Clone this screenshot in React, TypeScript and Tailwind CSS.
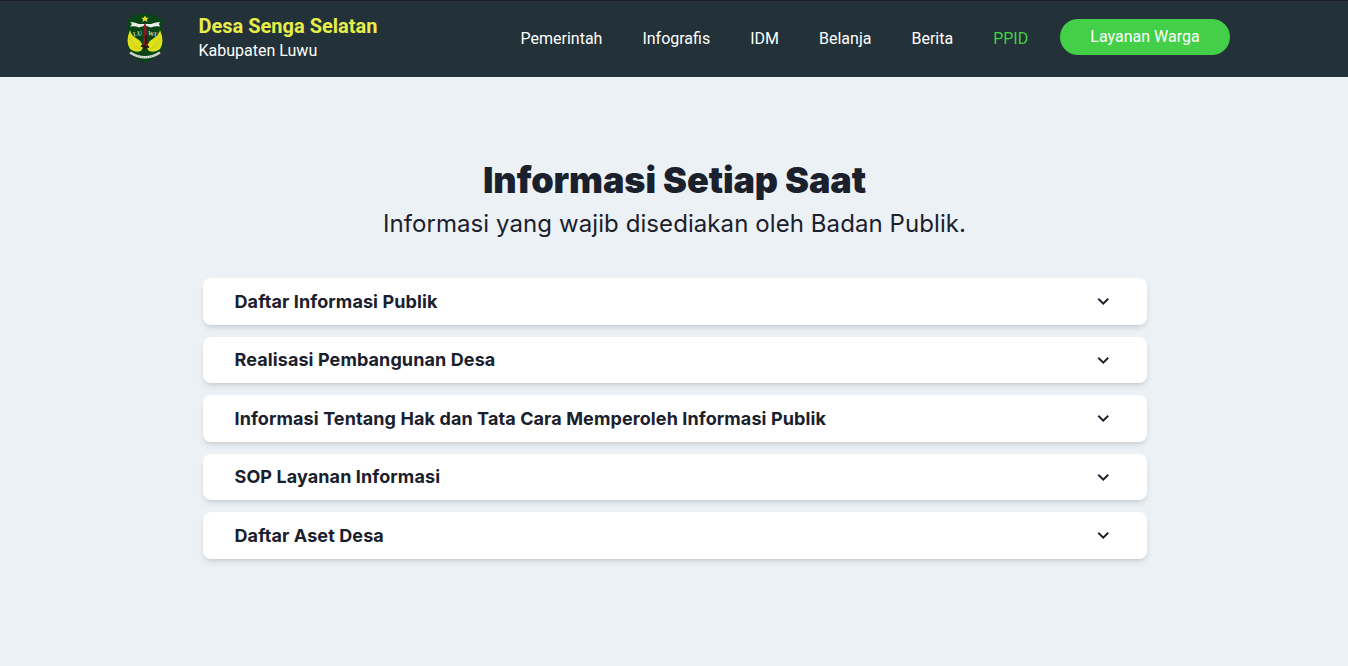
const links = ['Pemerintah', 'Infografis', 'IDM', 'Belanja', 'Berita', 'PPID'];

const sections = [
  'Daftar Informasi Publik',
  'Realisasi Pembangunan Desa',
  'Informasi Tentang Hak dan Tata Cara Memperoleh Informasi Publik',
  'SOP Layanan Informasi',
  'Daftar Aset Desa',
];

function Emblem() {
  return (
    <svg className="h-[50px] w-[38px] shrink-0" viewBox="0 0 38 50" aria-label="Kabupaten Luwu">
      <path d="M1 6 Q6 6 9 2 Q19 0 29 2 Q32 6 37 6 Q35 10 36 16 L37 34 Q34 43 19 50 Q4 43 1 34 L2 16 Q3 10 1 6Z" fill="#064516" />
      <path d="M4 17 Q-1 29 4 36 Q9 40 15 38 Q18 35 16 31 Q14 27 10 25 Q5 22 4 17Z M34 17 Q39 29 34 36 Q29 40 23 38 Q20 35 22 31 Q24 27 28 25 Q33 22 34 17Z" fill="#dfdf1c" />
      <path d="M4 25 Q6 31 13 35 M5 31 Q8 35 14 36 M34 25 Q32 31 25 35 M33 31 Q30 35 24 36" fill="none" stroke="#b9bf18" strokeWidth=".5" />
      <path d="M4 9 Q8 9 13 11 L25 11 Q30 9 34 9 L33 11 L34 13.500 Q29 12.500 25 14.500 L19 12.500 L13 14.500 Q9 12.500 4 13.500 L6 11Z" fill="#e9efe7" />
      <path d="m19 2.500 1.200 2.200h2.600l-2 1.700.8 2.600-2.600-1.600-2.600 1.600.8-2.600-2-1.700h2.600Z" fill="#e4dc29" />
      <path d="m19 9 1.500 5 .5 17 1.500 3h-7l1.500-3 .5-17Z" fill="#8e1820" />
      <path d="M18.500 32v5M15 33l8 1M20 22v9" stroke="#201d12" strokeWidth="1.800" />
      <g fill="#c5d4c2" fontFamily="Liberation Serif, serif" fontSize="6.500" fontWeight="700">
        <text x="7.500" y="23.500" transform="rotate(-10 7.500 23.500)">LU</text>
        <text x="21.500" y="22" transform="rotate(12 21.500 22)">WU</text>
      </g>
      <path d="M4 39.500 Q19 49 34 39.500" fill="none" stroke="#dfe4dc" strokeWidth="2.600" />
      <path d="M4 39.500 Q19 49 34 39.500" fill="none" stroke="#8fa08c" strokeWidth="1" strokeDasharray="1 1" />
    </svg>
  );
}

export default function App() {
  return (
    <div className="min-h-screen bg-[#ecf1f6] font-['Inter',sans-serif] text-[#1a202c]">
      <header className="flex h-[77px] border-t border-[#1e1e29] bg-[#233138] pl-[126px] font-['Roboto',sans-serif] text-white">
        <div className="flex w-[394.500px] shrink-0">
          <div className="mt-[12px]"><Emblem /></div>
          <div className="ml-[34.500px] pt-[13px]">
            <div className="text-[20px] leading-[25px] font-bold text-[#e8ee49]">Desa Senga Selatan</div>
            <div className="text-base leading-6">Kabupaten Luwu</div>
          </div>
        </div>
        <nav className="flex w-[539.500px] shrink-0 gap-10 pt-[26px] text-base leading-6">
          {links.map((link) => (
            <a key={link} href="#" className={link === 'PPID' ? 'text-[#43cf47]' : ''}>{link}</a>
          ))}
        </nav>
        <button className="mt-[18px] h-9 w-[170px] shrink-0 rounded-full bg-[#43cf47] text-base leading-6">Layanan Warga</button>
      </header>
      <main className="flex flex-col items-center pt-[81px] pl-px">
        <h1 className="text-[36px] leading-[45px] font-black tracking-[-0.1px]">Informasi Setiap Saat</h1>
        <p className="text-2xl leading-[42px] tracking-[0.08px]">Informasi yang wajib disediakan oleh Badan Publik.</p>
        <div className="mt-[33px] flex w-[944px] flex-col gap-3">
          {sections.map((title) => (
            <button key={title} className="flex h-[46.500px] items-center justify-between rounded-lg bg-white pr-[32px] pl-[32px] text-left text-lg font-bold tracking-[0.1px] shadow-md">
              <span className="pt-px">{title}</span>
              <svg viewBox="0 0 24 24" className="size-[22.500px]" fill="currentColor">
                <path d="M16.590 8.590 12 13.170 7.410 8.590 6 10l6 6 6-6z" />
              </svg>
            </button>
          ))}
        </div>
      </main>
    </div>
  );
}
